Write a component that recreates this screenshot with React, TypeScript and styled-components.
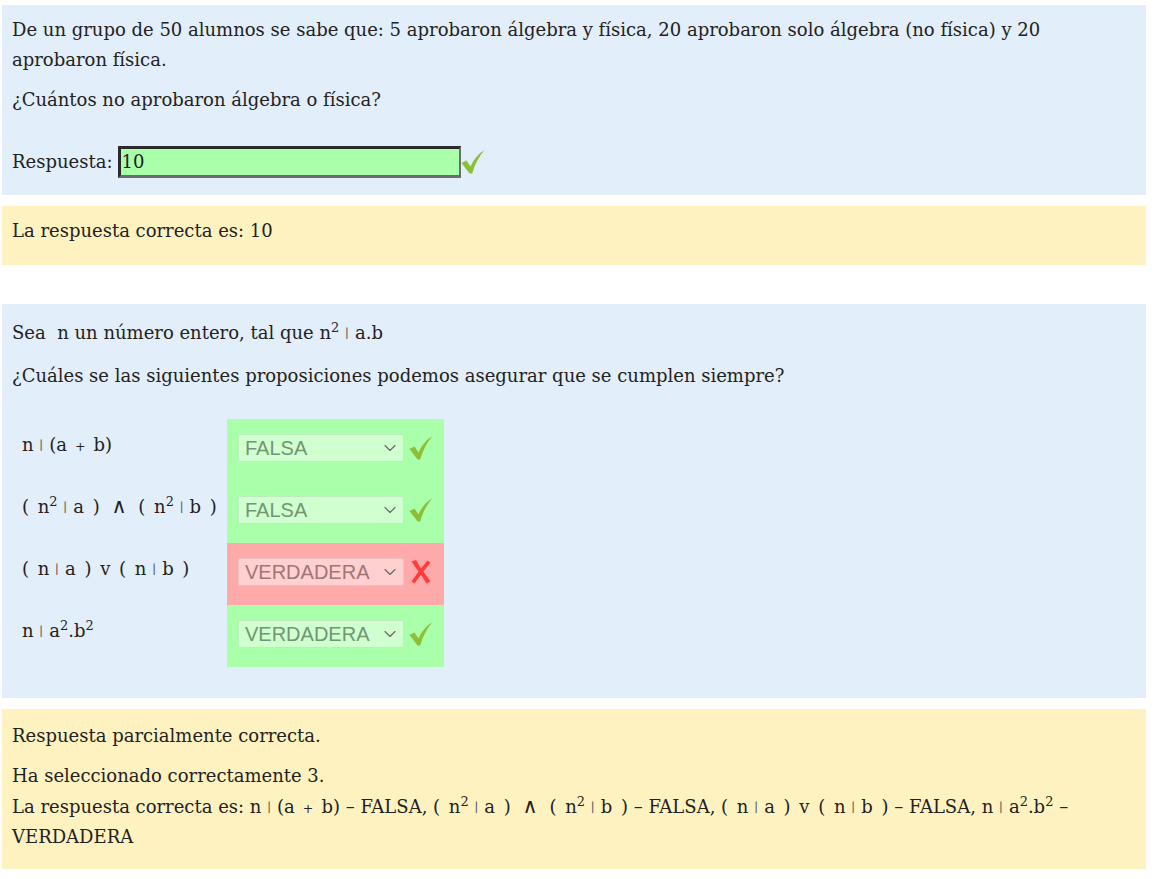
import React from "react";
import styled, { createGlobalStyle } from "styled-components";
import { ChevronDown } from "lucide-react";

const GlobalStyle = createGlobalStyle`
  html, body { margin: 0; padding: 0; background: #ffffff; }
  body {
    font-family: "DejaVu Serif", "Liberation Serif", serif;
    font-size: 18px;
    color: #222222;
  }
`;

const Page = styled.div`
  width: 1144px;
  padding: 5px 0 0 2px;
`;

const Question = styled.div<{ $gap?: number }>`
  margin-top: ${(p) => p.$gap ?? 0}px;
`;

const Formulation = styled.div<{ $top: number; $bottom: number }>`
  background: #e2eef9;
  padding: ${(p) => p.$top}px 10px ${(p) => p.$bottom}px 10px;
`;

const Para = styled.p<{ $mb?: number }>`
  margin: 0 0 ${(p) => p.$mb ?? 0}px 0;
  line-height: 30px;
`;

const Math = styled.span`
  word-spacing: 3px;
`;

const Sup = styled.sup`
  font-size: 0.72em;
  line-height: 0;
  vertical-align: 0.55em;
`;

const Div = styled.span`
  font-size: 0.7em;
  line-height: 0;
  color: #555;
  vertical-align: 0.1em;
  padding: 0 6px;
`;

const Plus = styled.span`
  font-size: 0.7em;
  line-height: 0;
  padding: 0 1px;
`;

const And = styled.span`
  font-size: 1.15em;
  line-height: 0;
  padding: 0 3px;
`;

const AnswerRow = styled.div`
  display: flex;
  align-items: center;
  margin-top: 31px;
  height: 32px;
  line-height: 30px;
`;

const Input = styled.div`
  box-sizing: border-box;
  width: 343px;
  height: 32px;
  margin-left: 6px;
  background: #aaffaa;
  border: 3px solid #2a2a2a;
  border-right: 2px solid #6d6d6d;
  border-bottom: 3px solid #6d6d6d;
  padding-left: 0;
  line-height: 26px;
  color: #222;
`;

const Outcome = styled.div<{ $top: number; $bottom: number }>`
  margin-top: 11px;
  background: #fff2c1;
  padding: ${(p) => p.$top}px 10px ${(p) => p.$bottom}px 10px;
`;

const Table = styled.table`
  border-collapse: collapse;
  margin-top: 28px;
`;

const LabelCell = styled.td`
  width: 215px;
  height: 62px;
  box-sizing: border-box;
  padding: 11px 10px 0 10px;
  vertical-align: top;
  line-height: 30px;
  white-space: nowrap;
`;

const ControlCell = styled.td<{ $ok: boolean }>`
  box-sizing: border-box;
  height: 62px;
  padding: 15px 11px 0 11px;
  vertical-align: top;
  background: ${(p) => (p.$ok ? "#aaffaa" : "#ffaaaa")};
`;

const ControlInner = styled.div`
  display: flex;
  align-items: center;
  gap: 5px;
`;

const SelectBox = styled.div<{ $ok: boolean }>`
  box-sizing: border-box;
  width: 166px;
  height: 28px;
  display: flex;
  align-items: center;
  justify-content: space-between;
  padding: 0 3px 0 6px;
  border: 1px solid rgba(0, 0, 0, 0.08);
  border-radius: 2px;
  background: rgba(255, 255, 255, 0.45);
  font-family: "Liberation Sans", Arial, sans-serif;
  font-size: 20px;
  color: ${(p) => (p.$ok ? "#729672" : "#a07676")};
  svg { color: #6a6a6a; flex-shrink: 0; }
`;

const IconWrap = styled.span`
  display: inline-flex;
  width: 24px;
  height: 26px;
`;

const CheckIcon = () => (
  <IconWrap>
    <svg width="24" height="26" viewBox="0 0 24 26">
      <path
        d="M0.5 14 L5.5 11.5 L9.5 17.5 C12.5 10.5 17 5 23.5 1 C18 7.5 13.8 15 11.2 24.5 L8.6 24.5 Z"
        fill="#8cbf35"
      />
    </svg>
  </IconWrap>
);

const CrossIcon = () => (
  <IconWrap>
    <svg width="24" height="26" viewBox="0 0 24 26">
      <path
        d="M2.5 2.5 L7 1 L12 9.5 L18.5 1.5 L21.5 3.5 L14.5 12.5 L21.5 22.5 L17.5 24.5 L12 15.5 L5.5 24.5 L2.5 22.5 L9.5 12.5 Z"
        fill="#ff3b3b"
      />
    </svg>
  </IconWrap>
);

const rows: { label: React.ReactNode; value: string; ok: boolean }[] = [
  {
    label: (
      <Math>
        n<Div>∣</Div>(a<Plus> + </Plus>b)
      </Math>
    ),
    value: "FALSA",
    ok: true,
  },
  {
    label: (
      <Math>
        ( n<Sup>2</Sup>
        <Div>∣</Div>a ) <And>∧</And> ( n<Sup>2</Sup>
        <Div>∣</Div>b )
      </Math>
    ),
    value: "FALSA",
    ok: true,
  },
  {
    label: (
      <Math>
        ( n<Div>∣</Div>a ) v ( n<Div>∣</Div>b )
      </Math>
    ),
    value: "VERDADERA",
    ok: false,
  },
  {
    label: (
      <Math>
        n<Div>∣</Div>a<Sup>2</Sup>.b<Sup>2</Sup>
      </Math>
    ),
    value: "VERDADERA",
    ok: true,
  },
];

export default function App() {
  return (
    <>
      <GlobalStyle />
      <Page>
        <Question>
          <Formulation $top={10} $bottom={17}>
            <Para $mb={10}>
              De un grupo de 50 alumnos se sabe que: 5 aprobaron álgebra y física, 20 aprobaron solo
              álgebra (no física) y 20 aprobaron física.
            </Para>
            <Para>¿Cuántos no aprobaron álgebra o física?</Para>
            <AnswerRow>
              Respuesta:
              <Input>10</Input>
              <CheckIcon />
            </AnswerRow>
          </Formulation>
          <Outcome $top={10} $bottom={19}>
            <Para>La respuesta correcta es: 10</Para>
          </Outcome>
        </Question>

        <Question $gap={39}>
          <Formulation $top={14} $bottom={31}>
            <Para $mb={13}>
              Sea&nbsp; n un número entero, tal que{" "}
              <Math>
                n<Sup>2</Sup>
                <Div>∣</Div>a.b
              </Math>
            </Para>
            <Para>¿Cuáles se las siguientes proposiciones podemos asegurar que se cumplen siempre?</Para>
            <Table>
              <tbody>
                {rows.map((r, i) => (
                  <tr key={i}>
                    <LabelCell>{r.label}</LabelCell>
                    <ControlCell $ok={r.ok}>
                      <ControlInner>
                        <SelectBox $ok={r.ok}>
                          <span>{r.value}</span>
                          <ChevronDown size={20} strokeWidth={1.4} />
                        </SelectBox>
                        {r.ok ? <CheckIcon /> : <CrossIcon />}
                      </ControlInner>
                    </ControlCell>
                  </tr>
                ))}
              </tbody>
            </Table>
          </Formulation>
          <Outcome $top={12} $bottom={17}>
            <Para $mb={10}>Respuesta parcialmente correcta.</Para>
            <Para $mb={1}>Ha seleccionado correctamente 3.</Para>
            <Para>
              La respuesta correcta es:{" "}
              <Math>
                n<Div>∣</Div>(a<Plus> + </Plus>b)
              </Math>{" "}
              – FALSA,{" "}
              <Math>
                ( n<Sup>2</Sup>
                <Div>∣</Div>a ) <And>∧</And> ( n<Sup>2</Sup>
                <Div>∣</Div>b )
              </Math>{" "}
              – FALSA,{" "}
              <Math>
                ( n<Div>∣</Div>a ) v ( n<Div>∣</Div>b )
              </Math>{" "}
              – FALSA,{" "}
              <Math>
                n<Div>∣</Div>a<Sup>2</Sup>.b<Sup>2</Sup>
              </Math>{" "}
              – VERDADERA
            </Para>
          </Outcome>
        </Question>
      </Page>
    </>
  );
}
